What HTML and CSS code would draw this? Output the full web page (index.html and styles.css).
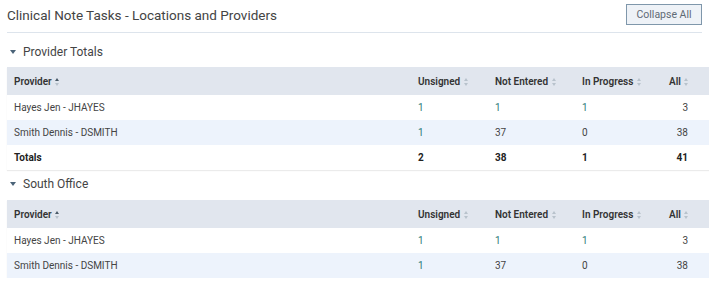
FILE: index.html
```html
<!DOCTYPE html>
<html>
<head>
<meta charset="utf-8">
<link rel="stylesheet" href="styles.css">
</head>
<body>
<div class="page">
  <div class="topbar">
    <h1 class="title">Clinical Note Tasks - Locations and Providers</h1>
    <button class="btn">Collapse All</button>
  </div>

  <section class="group first">
    <div class="group-head"><span class="caret"></span>Provider Totals</div>
    <table class="grid">
      <thead>
        <tr>
          <th class="c-prov">Provider <span class="sort up"></span></th>
          <th class="c-uns">Unsigned <span class="sort"></span></th>
          <th class="c-ne">Not Entered <span class="sort"></span></th>
          <th class="c-ip">In Progress <span class="sort"></span></th>
          <th class="c-all">All <span class="sort"></span></th>
        </tr>
      </thead>
      <tbody>
        <tr>
          <td>Hayes Jen - JHAYES</td>
          <td class="link">1</td>
          <td class="link">1</td>
          <td class="link">1</td>
          <td class="num">3</td>
        </tr>
        <tr class="alt">
          <td>Smith Dennis - DSMITH</td>
          <td class="link">1</td>
          <td>37</td>
          <td>0</td>
          <td class="num">38</td>
        </tr>
        <tr class="tot">
          <td>Totals</td>
          <td>2</td>
          <td>38</td>
          <td>1</td>
          <td class="num">41</td>
        </tr>
      </tbody>
    </table>
  </section>

  <section class="group">
    <div class="group-head"><span class="caret"></span>South Office</div>
    <table class="grid">
      <thead>
        <tr>
          <th class="c-prov">Provider <span class="sort up"></span></th>
          <th class="c-uns">Unsigned <span class="sort"></span></th>
          <th class="c-ne">Not Entered <span class="sort"></span></th>
          <th class="c-ip">In Progress <span class="sort"></span></th>
          <th class="c-all">All <span class="sort"></span></th>
        </tr>
      </thead>
      <tbody>
        <tr>
          <td>Hayes Jen - JHAYES</td>
          <td class="link">1</td>
          <td class="link">1</td>
          <td class="link">1</td>
          <td class="num">3</td>
        </tr>
        <tr class="alt">
          <td>Smith Dennis - DSMITH</td>
          <td class="link">1</td>
          <td>37</td>
          <td>0</td>
          <td class="num">38</td>
        </tr>
      </tbody>
    </table>
  </section>
</div>
</body>
</html>
```

FILE: styles.css
```css
html, body {
  margin: 0;
  padding: 0;
  background: #fff;
}
body {
  font-family: Roboto, "Liberation Sans", Arial, sans-serif;
  color: #333;
}
.page {
  width: 695px;
  padding: 0 7px;
}
.topbar {
  display: flex;
  align-items: center;
  justify-content: space-between;
  height: 33px;
  border-bottom: 1px solid #dde4ec;
  box-sizing: border-box;
}
.title {
  margin: 0;
  font-size: 13.5px;
  font-weight: 400;
  color: #444;
  padding-bottom: 2px;
}
.btn {
  font-family: inherit;
  font-size: 10.5px;
  color: #5f6a75;
  background: #eef2f7;
  border: 1px solid #7f97ab;
  height: 21px;
  width: 76px;
  padding: 0;
  margin-bottom: 4px;
  margin-right: 0;
}
.group-head {
  display: flex;
  align-items: flex-end;
  height: 30px;
  box-sizing: border-box;
  padding-bottom: 9px;
  font-size: 12px;
  line-height: 14px;
  color: #444;
  padding-left: 3px;
}
.group.first .group-head {
  height: 34px;
  padding-bottom: 8px;
}
.caret {
  width: 0;
  height: 0;
  border-left: 3px solid transparent;
  border-right: 3px solid transparent;
  border-top: 4px solid #4a6378;
  margin-right: 7px;
  margin-bottom: 5px;
}
.grid {
  width: 100%;
  border-collapse: collapse;
  font-size: 10px;
  box-shadow: 0 1px 1px rgba(0,0,0,0.08);
  table-layout: fixed;
}
.grid th {
  background: #e1e6ee;
  height: 28px;
  text-align: left;
  font-weight: 600;
  color: #333;
  padding: 0;
}
.grid td {
  height: 25px;
  padding: 0;
  color: #444;
}
.grid th.c-prov, .grid td:first-child {
  padding-left: 7px;
}
.c-prov { width: 404px; }
.c-uns { width: 77px; }
.c-ne { width: 87px; }
.c-ip { width: 87px; }
.c-all { width: 40px; }
.grid td.num {
  text-align: right;
  padding-right: 21px;
}
.grid td.link {
  color: #2e7a78;
}
.grid tr.alt td {
  background: #edf3fc;
}
.grid tr.tot td {
  font-weight: 700;
  color: #222;
}
.sort {
  display: inline-block;
  width: 5px;
  height: 8px;
  position: relative;
  vertical-align: -1px;
  margin-left: 1px;
}
.sort::before, .sort::after {
  content: "";
  position: absolute;
  left: 0;
  border-left: 2.5px solid transparent;
  border-right: 2.5px solid transparent;
}
.sort::before {
  top: 0;
  border-bottom: 3px solid #b8c2cc;
}
.sort::after {
  bottom: 0;
  border-top: 3px solid #b8c2cc;
}
.sort.up::before {
  border-bottom-color: #4a5a68;
}
```
